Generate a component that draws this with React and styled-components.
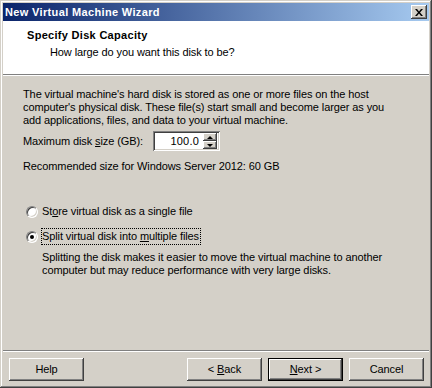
import React from 'react';
import styled, { createGlobalStyle } from 'styled-components';

const FACE = '#d4d0c8';
const SHADOW = '#808080';
const DARK = '#404040';
const HILITE = '#ffffff';

const raised = `
  box-shadow: inset -1px -1px ${DARK}, inset 1px 1px ${HILITE},
    inset -2px -2px ${SHADOW}, inset 2px 2px ${FACE};
`;

const GlobalStyle = createGlobalStyle`
  html, body { margin: 0; padding: 0; background: ${FACE}; }
  * { box-sizing: border-box; }
`;

const Window = styled.div`
  width: 432px;
  height: 388px;
  padding: 3px;
  display: flex;
  flex-direction: column;
  background: ${FACE};
  box-shadow: inset -1px -1px ${DARK}, inset 1px 1px ${FACE},
    inset -2px -2px ${SHADOW}, inset 2px 2px ${HILITE};
  font-family: "Liberation Sans", Arial, sans-serif;
  font-size: 11px;
  line-height: 13px;
  letter-spacing: -0.1px;
  color: #000;
`;

const TitleBar = styled.div`
  height: 18px;
  flex: none;
  display: flex;
  align-items: center;
  justify-content: space-between;
  padding: 0 2px;
  background: linear-gradient(to right, #0a246a, #a6caf0);
  color: #fff;
  font-weight: bold;
  letter-spacing: 0.35px;
`;

const CloseButton = styled.div`
  width: 16px;
  height: 14px;
  display: flex;
  align-items: center;
  justify-content: center;
  background: ${FACE};
  ${raised}
`;

const Header = styled.div`
  height: 53px;
  flex: none;
  background: #fff;
  padding: 8px 0 0 24px;
`;

const HeaderTitle = styled.div`
  font-weight: bold;
  letter-spacing: 0.3px;
`;

const HeaderSub = styled.div`
  margin: 4px 0 0 23px;
`;

const Etched = styled.div`
  height: 2px;
  flex: none;
  border-top: 1px solid ${SHADOW};
  border-bottom: 1px solid ${HILITE};
`;

const Body = styled.div`
  padding: 12px 0 0 20px;
`;

const Para = styled.p`
  margin: ${p => p.$top || 0}px 0 0 ${p => p.$indent || 0}px;
`;

const SizeRow = styled.div`
  display: flex;
  align-items: center;
  height: 20px;
  margin-top: 4px;
`;

const SizeLabel = styled.div`
  width: 130px;
`;

const Spin = styled.div`
  width: 67px;
  height: 20px;
  display: flex;
  align-items: center;
  justify-content: flex-end;
  padding: 2px 3px 2px 2px;
  background: #fff;
  box-shadow: inset 1px 1px ${SHADOW}, inset -1px -1px ${HILITE},
    inset 2px 2px ${DARK}, inset -2px -2px ${FACE};
`;

const SpinValue = styled.span`
  margin-right: 4px;
  letter-spacing: 0.2px;
`;

const SpinButtons = styled.div`
  display: flex;
  flex-direction: column;
  width: 14px;
  height: 16px;
`;

const SpinHalf = styled.div`
  flex: 1;
  display: flex;
  align-items: center;
  justify-content: center;
  background: ${FACE};
  ${raised}
  &::after {
    content: '';
    border-left: 3px solid transparent;
    border-right: 3px solid transparent;
    ${p => p.$down ? 'border-top: 3px solid #000;' : 'border-bottom: 3px solid #000;'}
  }
`;

const RadioRow = styled.div`
  display: flex;
  align-items: center;
  height: 17px;
  margin: ${p => p.$top}px 0 0 3px;
`;

const RadioCircle = styled.span`
  width: 12px;
  height: 12px;
  flex: none;
  border-radius: 50%;
  display: flex;
  align-items: center;
  justify-content: center;
  background: #fff;
  border: 1px solid;
  border-color: ${SHADOW} ${HILITE} ${HILITE} ${SHADOW};
  box-shadow: inset 1px 1px ${DARK}, inset -1px -1px ${FACE};
  margin-right: 3px;
  &::after {
    content: '';
    display: ${p => (p.$checked ? 'block' : 'none')};
    width: 4px;
    height: 4px;
    border-radius: 50%;
    background: #000;
  }
`;

const RadioLabel = styled.span`
  padding: 1px 1px 1px 0;
  border: 1px dotted ${p => (p.$focused ? '#000' : 'transparent')};
  line-height: 13px;
`;

const Footer = styled.div`
  margin-top: auto;
  flex: none;
`;

const ButtonRow = styled.div`
  display: flex;
  gap: 6px;
  padding: 6px 5px 4px 6px;
`;

const Spacer = styled.div`
  flex: 1;
`;

const Button = styled.div`
  width: 75px;
  height: 23px;
  display: flex;
  align-items: center;
  justify-content: center;
  background: ${FACE};
  ${raised}
  ${p => p.$default && `
    border: 1px solid #000;
  `}
`;

const U = styled.span`
  text-decoration: underline;
`;

function CloseIcon() {
  return (
    <svg width="8" height="7" viewBox="0 0 8 7">
      <path d="M0 0h2l2 2.5L6 0h2L5 3.5 8 7H6L4 4.5 2 7H0l3-3.5z" fill="#000" />
    </svg>
  );
}

export default function App() {
  return (
    <>
      <GlobalStyle />
      <Window>
        <TitleBar>
          <span>New Virtual Machine Wizard</span>
          <CloseButton><CloseIcon /></CloseButton>
        </TitleBar>
        <Header>
          <HeaderTitle>Specify Disk Capacity</HeaderTitle>
          <HeaderSub>How large do you want this disk to be?</HeaderSub>
        </Header>
        <Etched />
        <Body>
          <Para>
            The virtual machine's hard disk is stored as one or more files on the host<br />
            computer's physical disk. These file(s) start small and become larger as you<br />
            add applications, files, and data to your virtual machine.
          </Para>
          <SizeRow>
            <SizeLabel>Maximum disk <U>s</U>ize (GB):</SizeLabel>
            <Spin>
              <SpinValue>100.0</SpinValue>
              <SpinButtons>
                <SpinHalf />
                <SpinHalf $down />
              </SpinButtons>
            </Spin>
          </SizeRow>
          <Para $top={9}>Recommended size for Windows Server 2012: 60 GB</Para>
          <RadioRow $top={30}>
            <RadioCircle />
            <RadioLabel>St<U>o</U>re virtual disk as a single file</RadioLabel>
          </RadioRow>
          <RadioRow $top={8}>
            <RadioCircle $checked />
            <RadioLabel $focused>Split virtual disk into <U>m</U>ultiple files</RadioLabel>
          </RadioRow>
          <Para $top={6} $indent={19}>
            Splitting the disk makes it easier to move the virtual machine to another<br />
            computer but may reduce performance with very large disks.
          </Para>
        </Body>
        <Footer>
          <Etched />
          <ButtonRow>
            <Button><span>Help</span></Button>
            <Spacer />
            <Button><span>&lt; <U>B</U>ack</span></Button>
            <Button $default><span><U>N</U>ext &gt;</span></Button>
            <Button><span>Cancel</span></Button>
          </ButtonRow>
        </Footer>
      </Window>
    </>
  );
}
